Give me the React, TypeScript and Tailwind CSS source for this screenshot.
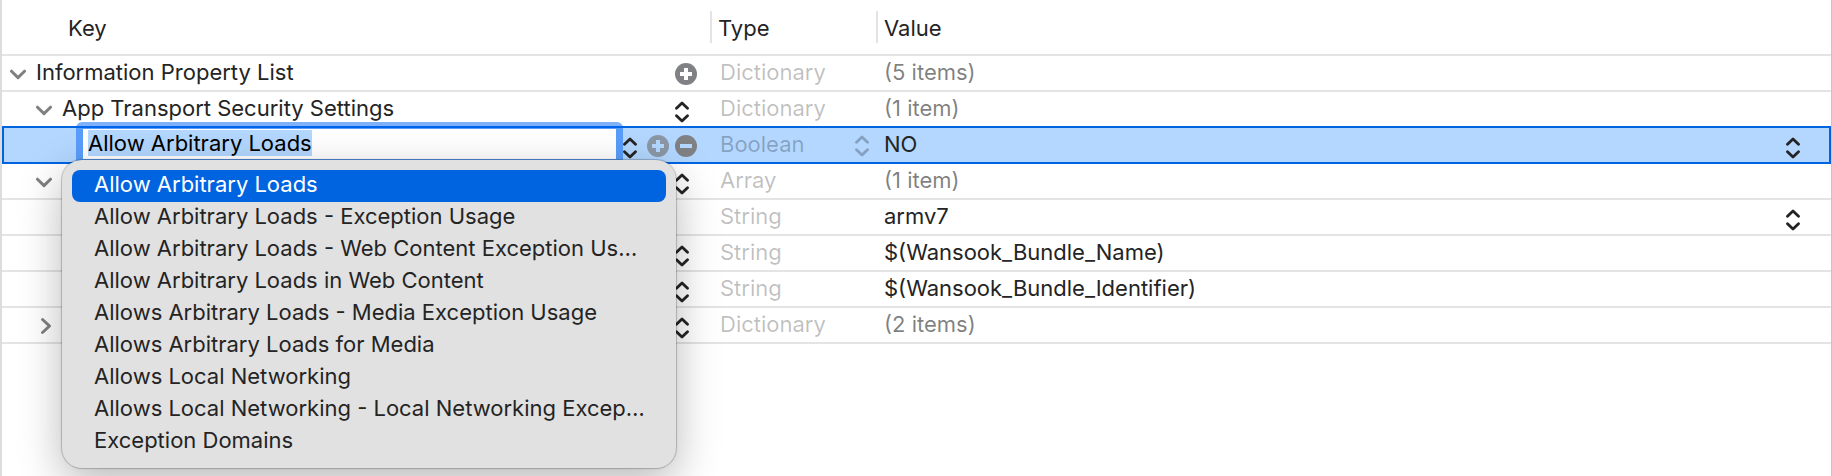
import { useEffect, useRef, useState } from "react";

type Row = {
  name?: string;
  indent: string;
  disclosure?: "open" | "closed";
  action?: "add" | "stepper";
  type: string;
  value: string;
  muted?: boolean;
  valueStepper?: boolean;
  editing?: boolean;
  beforeEditing?: boolean;
};

const rows: Row[] = [
  { name: "Information Property List", indent: "pl-2", disclosure: "open", action: "add", type: "Dictionary", value: "(5 items)", muted: true },
  { name: "App Transport Security Settings", indent: "pl-[34px]", disclosure: "open", action: "stepper", type: "Dictionary", value: "(1 item)", muted: true, beforeEditing: true },
  { indent: "", type: "Boolean", value: "NO", valueStepper: true, editing: true },
  { indent: "pl-[34px]", disclosure: "open", action: "stepper", type: "Array", value: "(1 item)", muted: true },
  { indent: "pl-[34px]", type: "String", value: "armv7", valueStepper: true },
  { indent: "pl-[34px]", action: "stepper", type: "String", value: "$(Wansook_Bundle_Name)" },
  { indent: "pl-[34px]", action: "stepper", type: "String", value: "$(Wansook_Bundle_Identifier)" },
  { indent: "pl-[34px]", disclosure: "closed", action: "stepper", type: "Dictionary", value: "(2 items)", muted: true },
];

const suggestions = [
  "Allow Arbitrary Loads",
  "Allow Arbitrary Loads - Exception Usage",
  "Allow Arbitrary Loads - Web Content Exception Us…",
  "Allow Arbitrary Loads in Web Content",
  "Allows Arbitrary Loads - Media Exception Usage",
  "Allows Arbitrary Loads for Media",
  "Allows Local Networking",
  "Allows Local Networking - Local Networking Excep…",
  "Exception Domains",
];

function Stepper({ label }: { label: string }) {
  return (
    <button type="button" aria-label={label} className="block shrink-0">
      <svg width="14" height="22" viewBox="0 0 14 22" fill="none" stroke="currentColor" strokeWidth="2.8" strokeLinecap="round" strokeLinejoin="round">
        <path d="M1.5 7.2 7 1.9l5.5 5.3M1.5 14.8 7 20.1l5.5-5.3" />
      </svg>
    </button>
  );
}

function RoundButton({ label, minus, faded, hole }: { label: string; minus?: boolean; faded?: boolean; hole: string }) {
  return (
    <button type="button" aria-label={label} className="block shrink-0">
      <svg width="22" height="22" viewBox="0 0 22 22">
        <circle cx="11" cy="11" r="11" fill={faded ? "#8b97a5" : "#808185"} />
        <path d={minus ? "M5 11h12" : "M5 11h12M11 5v12"} stroke={hole} strokeWidth="4" />
      </svg>
    </button>
  );
}

function Disclosure({ state }: { state: "open" | "closed" }) {
  return (
    <button type="button" aria-label={state === "open" ? "Collapse" : "Expand"} className="block">
      <svg width="16" height="18" viewBox="0 0 16 18" fill="none" stroke="#808080" strokeWidth="3" strokeLinecap="round" strokeLinejoin="round">
        <path d={state === "open" ? "M1.5 6.2 8 12.6l6.5-6.4" : "M6.5 2.5 13.5 9l-7 6.5"} />
      </svg>
    </button>
  );
}

function KeyEditor() {
  const input = useRef<HTMLInputElement>(null);
  const [text, setText] = useState(suggestions[0]);
  useEffect(() => {
    input.current?.focus();
    input.current?.select();
  }, []);
  return (
    <>
      <div className="flex h-[34px] items-start pr-[13px] pl-[72px]">
        <input
          ref={input}
          aria-label="Key"
          value={text}
          onChange={(e) => setText(e.target.value)}
          className="relative -mt-[6px] h-11 min-w-0 flex-1 rounded-md border-[7px] border-[rgba(0,100,245,0.5)] bg-white bg-clip-padding px-[5px] pb-[2px] text-black outline-none selection:bg-[#b3d7ff] selection:text-black"
        />
        <div className="flex items-start gap-[10px] pt-[7px]">
          <div className="pt-[2px]">
            <Stepper label="Choose key" />
          </div>
          <div className="flex items-start gap-[6px]">
            <RoundButton label="Add item" faded hole="#b3d7ff" />
            <RoundButton label="Remove item" minus hole="#b3d7ff" />
          </div>
        </div>
      </div>
      <ul
        role="listbox"
        aria-label="Key suggestions"
        className="absolute top-8 left-[58px] z-10 w-[614px] rounded-[20px] bg-[#e1e1e1] p-[10px] shadow-[0_0_1px_1px_rgba(0,0,0,0.22),0_14px_44px_rgba(0,0,0,0.28)]"
      >
        {suggestions.map((item, i) => (
          <li
            key={item}
            role="option"
            aria-selected={i === 0}
            className={
              i === 0
                ? "h-8 rounded-lg bg-[#0064e1] px-[22px] leading-7 whitespace-nowrap text-white"
                : "h-8 px-[22px] leading-7 whitespace-nowrap"
            }
          >
            {item}
          </li>
        ))}
      </ul>
    </>
  );
}

export default function App() {
  return (
    <main className="min-h-screen border-r border-l-2 border-r-[#c6c6c6] border-l-[#dcdcdc] bg-white font-['Inter',sans-serif] text-[22px] text-[#242424]">
      <table className="w-full table-fixed border-separate border-spacing-0 text-left">
        <colgroup>
          <col className="w-[708px]" />
          <col className="w-[166px]" />
          <col />
        </colgroup>
        <thead>
          <tr>
            <th scope="col" className="h-14 border-b-2 border-[#e4e4e4] p-0 pl-[66px] font-normal">
              <div className="h-8 leading-[34px]">Key</div>
            </th>
            <th scope="col" className="h-14 border-b-2 border-[#e4e4e4] p-0 font-normal">
              <div className="h-8 border-l-2 border-[#e4e4e4] pl-[6px] leading-[34px]">Type</div>
            </th>
            <th scope="col" className="h-14 border-b-2 border-[#e4e4e4] p-0 font-normal">
              <div className="h-8 border-l-2 border-[#e4e4e4] pl-[6px] leading-[34px]">Value</div>
            </th>
          </tr>
        </thead>
        <tbody>
          {rows.map((row, i) => {
            const cell = row.editing
              ? "border-b-2 border-[#0064e1] bg-[#b3d7ff] p-0"
              : row.beforeEditing
                ? "border-b-2 border-[#0064e1] p-0"
                : "border-b-2 border-[#e4e4e4] p-0";
            return (
              <tr key={i} className="align-top">
                <td className={row.editing ? `${cell} relative border-l-2` : cell}>
                  {row.editing ? (
                    <KeyEditor />
                  ) : (
                    <div className={`flex h-[34px] items-start pr-[13px] ${row.indent}`}>
                      <div className="w-6 shrink-0 pt-[9px]">{row.disclosure && <Disclosure state={row.disclosure} />}</div>
                      <div className="flex-1 pl-[2px] leading-8">{row.name}</div>
                      <div className="w-[22px] shrink-0">
                        {row.action === "add" && (
                          <div className="pt-[7px]">
                            <RoundButton label="Add item" hole="#ffffff" />
                          </div>
                        )}
                        {row.action === "stepper" && (
                          <div className="pt-[9px]">
                            <Stepper label="Choose key" />
                          </div>
                        )}
                      </div>
                    </div>
                  )}
                </td>
                <td className={cell}>
                  <div className="flex h-[34px] items-start justify-between pr-[7px] pl-[10px] leading-8 text-black/25">
                    <span>{row.type}</span>
                    {row.editing && (
                      <div className="pt-[7px]">
                        <Stepper label="Choose type" />
                      </div>
                    )}
                  </div>
                </td>
                <td className={row.editing ? `${cell} border-r-2` : cell}>
                  <div
                    className={`flex h-[34px] items-start justify-between pl-2 leading-8 ${row.editing ? "pr-[29px]" : "pr-[31px]"} ${row.muted ? "text-black/50" : "text-[#242424]"}`}
                  >
                    <span>{row.value}</span>
                    {row.valueStepper && (
                      <div className="pt-[9px]">
                        <Stepper label="Choose value" />
                      </div>
                    )}
                  </div>
                </td>
              </tr>
            );
          })}
        </tbody>
      </table>
    </main>
  );
}
